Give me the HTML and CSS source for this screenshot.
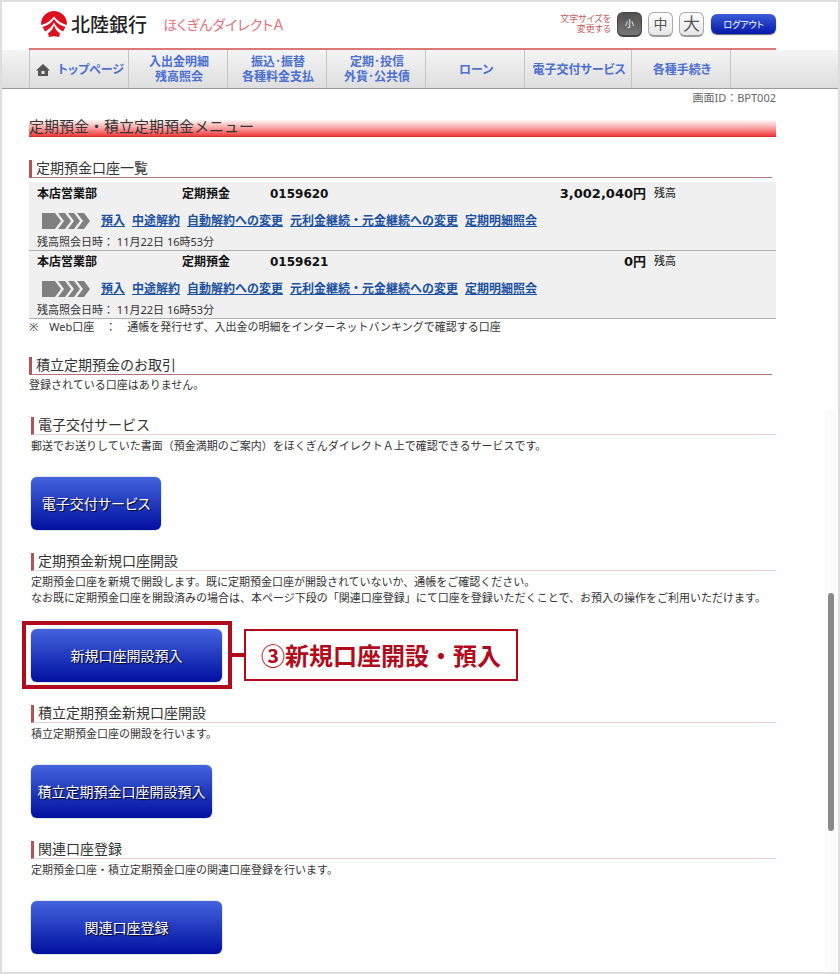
FILE: index.html
```
<!DOCTYPE html>
<html lang="ja">
<head>
	<meta charset="utf-8">
	<meta name="viewport" content="width=device-width, initial-scale=1">
	<title>定期預金・積立定期預金メニュー</title>
	<link rel="stylesheet" href="styles.css">
</head>
<body>
	<div class="page">
		<header class="header">
			<a class="logo" href="#">
				<svg class="logo-mark" viewBox="0 0 26 26" aria-hidden="true">
					<path fill="#dc1020" d="M0 13A13 13 0 0 1 26 13L25.500 14Q17.500 11.500 13 5.500Q8.500 11.500 0.500 14Z"/>
					<path fill="#dc1020" d="M13 8Q17 14 24.500 16L22 20.500Q15.500 17 13 11.500Q10.500 17 4 20.500L1.500 16Q9 14 13 8Z"/>
					<path fill="#dc1020" d="M13 14Q14.500 19.500 19 22.500L18 26Q13 24.500 8 26L7 22.500Q11.500 19.500 13 14Z"/>
				</svg>
				<span class="logo-name">北陸銀行</span>
			</a>
			<span class="service-name">ほくぎんダイレクトＡ</span>
			<div class="tools">
				<span class="size-label">文字サイズを<br>変更する</span>
				<button class="size-button size-small active" type="button">小</button>
				<button class="size-button size-medium" type="button">中</button>
				<button class="size-button size-large" type="button">大</button>
				<button class="logout" type="button">ログアウト</button>
			</div>
		</header>

		<nav class="nav">
			<ul class="nav-list">
				<li><a class="nav-link" href="#">
					<svg class="home-icon" viewBox="0 0 14 13" aria-hidden="true">
						<path fill="#555" fill-rule="evenodd" d="M7 0L14 6.500H12V12H2V6.500H0ZM5.500 7V10H8.500V7Z"/>
					</svg>
					トップページ</a></li>
				<li><a class="nav-link" href="#">入出金明細<br>残高照会</a></li>
				<li><a class="nav-link" href="#">振込･振替<br>各種料金支払</a></li>
				<li><a class="nav-link" href="#">定期･投信<br>外貨･公共債</a></li>
				<li><a class="nav-link" href="#">ローン</a></li>
				<li class="wide"><a class="nav-link" href="#">電子交付サービス</a></li>
				<li><a class="nav-link" href="#">各種手続き</a></li>
			</ul>
		</nav>

		<main class="main">
			<p class="screen-id">画面ID：BPT002</p>
			<h1 class="title">定期預金・積立定期預金メニュー</h1>

			<section class="accounts">
				<h2 class="heading">定期預金口座一覧</h2>
				<table class="account-table">
					<colgroup>
						<col class="col-branch">
						<col class="col-type">
						<col class="col-number">
						<col class="col-amount">
						<col class="col-label">
					</colgroup>
					<tbody class="account">
						<tr class="account-info">
							<td>本店営業部</td>
							<td>定期預金</td>
							<td>0159620</td>
							<td class="amount">3,002,040円</td>
							<td class="balance-label">残高</td>
						</tr>
						<tr>
							<td colspan="5">
								<div class="account-links">
									<svg class="arrows" viewBox="0 0 48 16" aria-hidden="true">
										<path fill="#808080" d="M0 0H13L19 8L13 16H0ZM16 0H23L29 8L23 16H16L22 8ZM26 0H32L38 8L32 16H26L32 8ZM35 0H42L48 8L42 16H35L41 8Z"/>
									</svg>
									<a href="#">預入</a>
									<a href="#">中途解約</a>
									<a href="#">自動解約への変更</a>
									<a href="#">元利金継続・元金継続への変更</a>
									<a href="#">定期明細照会</a>
								</div>
							</td>
						</tr>
						<tr class="account-date">
							<td colspan="5">残高照会日時： 11月22日 16時53分</td>
						</tr>
					</tbody>
					<tbody class="account">
						<tr class="account-info">
							<td>本店営業部</td>
							<td>定期預金</td>
							<td>0159621</td>
							<td class="amount">0円</td>
							<td class="balance-label">残高</td>
						</tr>
						<tr>
							<td colspan="5">
								<div class="account-links">
									<svg class="arrows" viewBox="0 0 48 16" aria-hidden="true">
										<path fill="#808080" d="M0 0H13L19 8L13 16H0ZM16 0H23L29 8L23 16H16L22 8ZM26 0H32L38 8L32 16H26L32 8ZM35 0H42L48 8L42 16H35L41 8Z"/>
									</svg>
									<a href="#">預入</a>
									<a href="#">中途解約</a>
									<a href="#">自動解約への変更</a>
									<a href="#">元利金継続・元金継続への変更</a>
									<a href="#">定期明細照会</a>
								</div>
							</td>
						</tr>
						<tr class="account-date">
							<td colspan="5">残高照会日時： 11月22日 16時53分</td>
						</tr>
					</tbody>
				</table>
				<p class="note">※　Web口座　：　通帳を発行せず、入出金の明細をインターネットバンキングで確認する口座</p>
			</section>

			<section class="deals">
				<h2 class="heading">積立定期預金のお取引</h2>
				<p class="text">登録されている口座はありません。</p>
			</section>

			<section class="service">
				<h2 class="heading">電子交付サービス</h2>
				<p class="text">郵送でお送りしていた書面（預金満期のご案内）をほくぎんダイレクトＡ上で確認できるサービスです。</p>
				<div class="actions">
					<button class="button" type="button">電子交付サービス</button>
				</div>
			</section>

			<section class="service">
				<h2 class="heading">定期預金新規口座開設</h2>
				<p class="text">定期預金口座を新規で開設します。既に定期預金口座が開設されていないか、通帳をご確認ください。<br>なお既に定期預金口座を開設済みの場合は、本ページ下段の「関連口座登録」にて口座を登録いただくことで、お預入の操作をご利用いただけます。</p>
				<div class="actions">
					<button class="button button-wide marked" type="button">新規口座開設預入</button>
					<span class="connector"></span>
					<strong class="callout">③新規口座開設・預入</strong>
				</div>
			</section>

			<section class="service">
				<h2 class="heading">積立定期預金新規口座開設</h2>
				<p class="text">積立定期預金口座の開設を行います。</p>
				<div class="actions">
					<button class="button button-long" type="button">積立定期預金口座開設預入</button>
				</div>
			</section>

			<section class="service">
				<h2 class="heading">関連口座登録</h2>
				<p class="text">定期預金口座・積立定期預金口座の関連口座登録を行います。</p>
				<div class="actions">
					<button class="button button-wide" type="button">関連口座登録</button>
				</div>
			</section>
		</main>

		<div class="scrollbar"><div class="thumb"></div></div>
	</div>
</body>
</html>
```
FILE: styles.css
```
* {
	box-sizing: border-box;
}

body {
	margin: 0;
	font-family: "Noto Sans", "Noto Sans CJK JP", sans-serif;
	font-size: 11px;
	line-height: 16px;
	color: #333;
	background-color: #fff;
}

h1, h2, p, ul {
	margin: 0;
	padding: 0;
	font-weight: normal;
}

button {
	padding: 0;
	border: none;
	font-family: inherit;
	font-feature-settings: "palt";
	cursor: pointer;
}

.page {
	position: relative;
	min-height: 100vh;
	border: 2px solid #ddd;
}

/* header */
.header {
	display: flex;
	align-items: center;
	height: 48px;
	margin: 0 62px 0 27px;
	padding: 0 0 2px 12px;
	border-bottom: 2px solid #dc7878;
	font-family: "DejaVu Sans", "Noto Sans CJK JP", sans-serif;
}

.logo {
	display: flex;
	align-items: center;
	gap: 4px;
	color: #222;
	text-decoration: none;
}

.logo-mark {
	width: 26px;
	height: 26px;
}

.logo-name {
	font-family: "Noto Sans CJK JP", sans-serif;
	font-size: 19px;
	font-weight: 500;
	line-height: 24px;
}

.service-name {
	margin-left: 16px;
	font-family: "Noto Sans CJK JP", sans-serif;
	font-size: 14px;
	font-feature-settings: "palt";
	color: #e4707a;
}

.tools {
	display: flex;
	align-items: center;
	gap: 6px;
	margin-left: auto;
}

.size-label {
	font-size: 9px;
	line-height: 10px;
	font-feature-settings: "palt";
	text-align: right;
	color: #c85858;
}

.size-button {
	width: 25px;
	height: 25px;
	border: 1px solid #aaa;
	border-bottom: 2px solid #999;
	border-radius: 6px;
	background: linear-gradient(#fff, #e6e6e6);
	color: #555;
	line-height: 20px;
}

.size-small {
	font-size: 9px;
}

.size-medium {
	font-size: 14px;
}

.size-large {
	font-size: 17px;
}

.size-button.active {
	border-color: #444;
	background: linear-gradient(#505050, #777);
	color: #fff;
}

.logout {
	width: 65px;
	height: 20px;
	margin-left: 1px;
	border-radius: 6px;
	background: linear-gradient(#3c5cd8, #0418a8);
	box-shadow: 0 1px 1px #667;
	font-size: 9px;
	color: #fff;
}

/* navigation */
.nav {
	border-bottom: 1px solid #999;
	background: linear-gradient(#f4f4f4, #dedede);
	font-family: "DejaVu Sans", "Noto Sans CJK JP", sans-serif;
}

.nav-list {
	display: flex;
	height: 38px;
	margin: 0 107px 0 27px;
	border-left: 1px solid #c4c4c4;
	list-style: none;
}

.nav-list li {
	flex: 99 1 0;
	border-right: 1px solid #c4c4c4;
}

.nav-list .wide {
	flex-grow: 107;
}

.nav-link {
	display: flex;
	align-items: center;
	justify-content: center;
	height: 100%;
	padding: 2px 0 0 2px;
	font-size: 12px;
	font-weight: bold;
	line-height: 15px;
	font-feature-settings: "palt";
	text-align: center;
	text-decoration: none;
	color: #4c70d0;
}

.home-icon {
	width: 14px;
	height: 13px;
	margin-right: 8px;
}

/* content */
.main {
	padding: 0 62px 17px 27px;
}

.screen-id {
	padding-top: 1px;
	text-align: right;
	color: #666;
}

.title {
	height: 22px;
	margin-top: 9px;
	background: linear-gradient(#fff 20%, #f8a0a0 60%, #f03c3c 95%, #c03030);
	font-size: 15px;
	line-height: 22px;
}

.heading {
	height: 18px;
	padding-left: 4px;
	border-left: 3px solid #b05458;
	border-bottom: 1px solid #ecd0d4;
	font-size: 14px;
	line-height: 16px;
}

.accounts, .deals {
	padding-top: 23px;
}

.accounts .heading, .deals .heading {
	margin-right: 4px;
	border-bottom-color: #b47478;
}

.account-table {
	width: 100%;
	margin-top: 4px;
	border-collapse: collapse;
	table-layout: fixed;
	background-color: #f0f0f0;
}

.account {
	border-bottom: 1px solid #b0b0b0;
}

.account td {
	padding: 0;
}

.account td:first-child {
	padding-left: 8px;
}

.col-branch {
	width: 153px;
}

.col-type {
	width: 88px;
}

.col-amount {
	width: 246px;
}

.col-number, .col-label {
	width: 130px;
}

.account-info {
	height: 24px;
	font-family: "DejaVu Sans", "Noto Sans CJK JP", sans-serif;
	font-size: 12px;
	font-weight: bold;
	color: #111;
}

.account .amount {
	font-size: 13px;
	text-align: right;
}

.account .balance-label {
	padding-left: 8px;
	font-size: 11px;
	font-weight: normal;
}

.account-links {
	display: flex;
	align-items: center;
	gap: 7px;
	height: 28px;
	padding: 2px 0 0 5px;
	font-size: 12px;
	font-weight: bold;
}

.account-links a {
	color: #1c50a0;
}

.arrows {
	width: 48px;
	height: 16px;
	margin-right: 4px;
}

.account-date {
	height: 16px;
	line-height: 14px;
}

.note {
	line-height: 15px;
}

.text {
	margin-top: 2px;
}

.service {
	padding: 23px 0 0 2px;
}

.deals + .service {
	padding-top: 24px;
}

.service .text {
	margin-top: 3px;
}

.actions {
	display: flex;
	align-items: center;
	margin-top: 23px;
}

.button {
	position: relative;
	min-width: 130px;
	height: 53px;
	border-radius: 6px;
	background: linear-gradient(#4464dc, #0010a0);
	box-shadow: 0 0 1px #002;
	font-size: 14px;
	color: #fff;
	text-shadow: 1px 1px 1px #001;
}

.button-long {
	min-width: 181px;
}

.button-wide {
	min-width: 191px;
}

/* highlighted step */
.marked::after {
	content: "";
	position: absolute;
	inset: -8px -10px -7px -9px;
	border: 4px solid #b00c1c;
}

.connector {
	width: 12px;
	height: 4px;
	margin-left: 10px;
	background-color: #b00c1c;
}

.callout {
	padding: 0 15px;
	border: 2px solid #b00c1c;
	background-color: #fff;
	font-family: "Noto Sans CJK JP", sans-serif;
	font-size: 24px;
	line-height: 48px;
	color: #b00c1c;
}

.scrollbar {
	position: absolute;
	top: 407px;
	right: 1px;
	bottom: 0;
	width: 12px;
	background-color: #fbfbfb;
}

.thumb {
	width: 6px;
	height: 238px;
	margin: 184px auto 0;
	border-radius: 3px;
	background-color: #8a8a8a;
}
```
